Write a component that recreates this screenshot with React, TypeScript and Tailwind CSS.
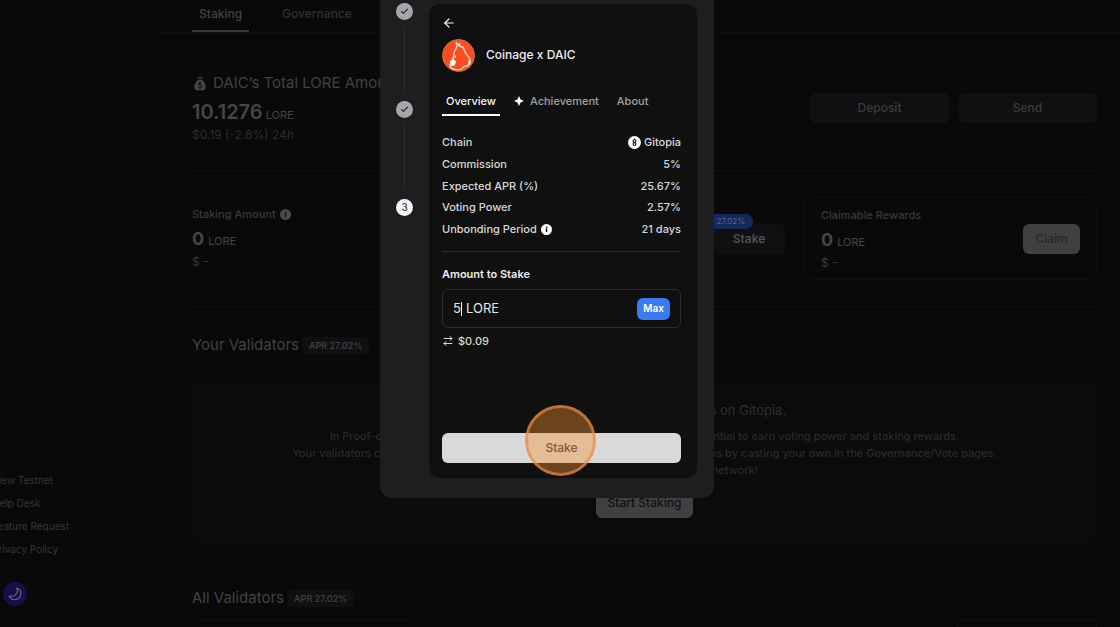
import { useState } from "react";
import { ArrowLeft, ArrowRightLeft, Check } from "lucide-react";

const footerLinks = ["View Testnet", "Help Desk", "Feature Request", "Privacy Policy"];

function InfoIcon({ className }: { className?: string }) {
  return (
    <svg viewBox="0 0 12 12" className={className} aria-hidden="true">
      <circle cx="6" cy="6" r="6" fill="currentColor" />
      <path d="M6.100 2.600v1.500M5.200 5.400h.9v3.400" stroke="#101011" strokeWidth="1.500" fill="none" />
    </svg>
  );
}

function MoneyBag() {
  return (
    <svg viewBox="0 0 14 17" className="mr-px size-4" aria-hidden="true">
      <path d="M3.6 1.2 5.4 2 7 1l1.8 1 1.8-.8-1.4 3.3H4.9z" fill="#303032" />
      <path d="M4.8 5.4h4.6c2 1.6 3.6 4.6 3.6 7 0 2.6-1.4 3.8-3 3.8H4c-1.6 0-3-1.2-3-3.8 0-2.4 1.8-5.4 3.8-7z" fill="#454547" />
      <path d="M9.2 8.8C8.600 8 5 7.600 5 9.400s4.200 1 4.200 2.800S5.600 14.200 4.800 13M7 7v8" stroke="#111" strokeWidth="1" fill="none" />
    </svg>
  );
}

function MoonIcon() {
  return (
    <svg viewBox="0 0 14 14" className="size-[14px]" aria-hidden="true">
      <path
        d="M8.600 1.200c3 .8 4.600 3.200 4.200 6-.4 3.200-3 5.400-6.200 5.400C4 12.600 2 11.200 1.200 9c2.400.8 4.800.4 6.400-1.200 1.800-1.700 2.100-4.300 1-6.600z"
        fill="none"
        stroke="#5c6668"
        strokeWidth="1.200"
        strokeLinejoin="round"
      />
    </svg>
  );
}

function CoinageLogo() {
  return (
    <svg viewBox="0 0 33 33" className="size-[33px]" aria-hidden="true">
      <circle cx="16.500" cy="16.500" r="16" fill="#fb4c22" stroke="#c07a3c" />
      <path
        d="M14.200 3.500l2 2.600 1.600-1.400-.4 2.600 3.400.8 1.400 3 2.400 4.200 3.200 4.200.6 4-2.600 3.200-3.800.8-2.200 2.400-3.400 1-4.600-.8-3-1.200-.8-3.400 2.400-4 1-3 .8-5.400 2.200-4.200.6-2.600z"
        fill="none"
        stroke="#f1dcc2"
        strokeWidth="1.400"
        strokeLinejoin="round"
      />
      <path d="M8 22l3.500-2 2.500 2.500-1.500 4L9 27zM12.500 16l1.500 1-1 3z" fill="#fff" />
      <path d="M20 7.500l3 1.500-2 1.200zM27 20l2 3-3.500 3z" fill="#f1dcc2" />
    </svg>
  );
}

function GitopiaIcon() {
  return (
    <svg viewBox="0 0 13 13" className="size-[13px]" aria-hidden="true">
      <circle cx="6.500" cy="6.500" r="6.500" fill="#fff" />
      <circle cx="6.500" cy="4.900" r="1.400" fill="none" stroke="#222" strokeWidth="1.200" />
      <circle cx="6.500" cy="8.100" r="1.400" fill="none" stroke="#222" strokeWidth="1.200" />
      <path d="M6.500 2.600v1.400M5.500 6.500h2" stroke="#222" />
    </svg>
  );
}

function AprBadge() {
  return (
    <span className="rounded-sm bg-[#101012] px-[7px] text-[9px] leading-[17px] font-semibold text-[#3d3d40]">
      APR 27.02%
    </span>
  );
}

function Balance({ label, info }: { label: string; info?: boolean }) {
  return (
    <div className="text-[11px] font-medium text-[#39393b]">
      <p className="flex items-center gap-1 leading-4">
        {label}
        {info && <InfoIcon className="size-[11px] text-[#4a4a4c]" />}
      </p>
      <p className="mt-1 flex items-baseline gap-1 leading-[26px] font-normal text-[#454547]">
        <span className="text-lg leading-[26px] font-bold">0</span> LORE
      </p>
      <p className="text-xs leading-4 font-normal">$ -</p>
    </div>
  );
}

function Sidebar() {
  return (
    <aside className="flex w-[156px] shrink-0 flex-col border-r border-[#0d0d0e] pt-[471px]">
      <nav className="-ml-2 flex flex-col gap-[5px] text-[10px] leading-[18px] text-[#353537]">
        {footerLinks.map((link) => (
          <a key={link} href="#" className="whitespace-nowrap">
            {link}
          </a>
        ))}
      </nav>
      <button
        aria-label="Toggle theme"
        className="mt-6 ml-[3px] flex size-6 items-center justify-center rounded-full bg-[#170f4c]"
      >
        <MoonIcon />
      </button>
    </aside>
  );
}

function Dashboard() {
  return (
    <main className="min-w-0 flex-1">
      <nav className="flex h-[33px] gap-[26px] border-b border-[#101011] pl-9 text-xs font-medium">
        <a href="#" className="border-b-2 border-[#3a3a3c] px-[7px] pt-1 leading-5 text-[#414143]">
          Staking
        </a>
        <a href="#" className="px-[7px] pt-1 leading-5 text-[#303032]">
          Governance
        </a>
      </nav>

      <div className="pr-[23px] pl-9">
        <section className="flex h-[138px] items-start justify-between border-b border-[#121213] pt-10">
          <div className="text-[#414143]">
            <h1 className="flex items-center gap-1 text-[15px] leading-5">
              <MoneyBag /> DAIC’s Total LORE Amount
            </h1>
            <p className="mt-1 flex items-baseline gap-[3px] text-[11px] leading-[30px] text-[#454547]">
              <span className="text-xl leading-[30px] font-semibold">10.1276</span> LORE
            </p>
            <p className="text-xs leading-[10px] text-[#2c2c2e]">$0.19 (-2.6%) 24h</p>
          </div>
          <div className="mt-5 flex gap-[9px] text-xs font-medium text-[#3b3b3d]">
            <button className="h-[30px] w-[139px] rounded-md bg-[#101012]">Deposit</button>
            <button className="h-[30px] w-[139px] rounded-md bg-[#101012]">Send</button>
          </div>
        </section>

        <section className="flex h-[136px] items-start gap-[19px] border-b border-[#121213] pt-[26px]">
          <div className="flex flex-1 items-start justify-between pt-[9px]">
            <Balance label="Staking Amount" info />
            <div className="relative mt-[18px]">
              <button className="h-[30px] w-[72px] rounded-md bg-[#101012] text-xs font-semibold text-[#505052]">
                Stake
              </button>
              <span className="absolute -top-[10px] right-8 rounded-full bg-[#142a5c] px-2 text-[8px] leading-[15px] whitespace-nowrap text-[#52648c]">
                APR 27.02%
              </span>
            </div>
          </div>
          <div className="flex h-[83px] w-[293px] items-center justify-between rounded-lg border border-[#101011] px-4">
            <Balance label="Claimable Rewards" />
            <button className="h-[30px] w-[57px] rounded-md bg-[#404042] text-xs font-medium text-[#282829]">
              Claim
            </button>
          </div>
        </section>

        <h2 className="mt-[26px] flex items-center gap-[3px] text-[15px] leading-6 text-[#414143]">
          Your Validators <AprBadge />
        </h2>
        <section className="mt-[22px] flex h-[164px] flex-col items-center rounded-md bg-[#0b0b0b] pt-[21px] text-center">
          <h3 className="text-[13px] leading-5 text-[#2e2e30]">You have not picked any validators on Gitopia.</h3>
          <p className="mt-2 text-[11px] leading-[17px] font-medium whitespace-nowrap text-[#29292b]">
            In Proof-of-Stake networks, picking trusted validators to delegate is essential to earn voting power and staking rewards.
            <br />
            Your validators cast votes for you on proposals, and you can override all the votes by casting your own in the Governance/Vote pages.
            <br />
            Start today and help to secure the network!
          </p>
          <button className="mt-[9px] h-[30px] w-[97px] shrink-0 rounded-md bg-[#404042] text-xs font-medium text-[#111]">
            Start Staking
          </button>
        </section>

        <h2 className="mt-[43px] flex items-center gap-[3px] text-[15px] leading-6 text-[#414143]">
          All Validators <AprBadge />
        </h2>
        <div className="mt-[9px] flex h-8 justify-between">
          <div className="w-[224px] rounded-t-md border-t border-[#131314]" />
          <div className="w-[140px] rounded-md border border-[#131314]" />
        </div>
      </div>
    </main>
  );
}

function Stepper() {
  return (
    <ol className="flex w-[49px] flex-col items-center pt-[3px]">
      {[1, 2].map((step) => (
        <li key={step} className="flex h-[98px] flex-col items-center">
          <span className="flex size-[17px] items-center justify-center rounded-full bg-[#a6a6aa] text-[#29292b]">
            <Check className="size-[9px]" strokeWidth={3} />
          </span>
          <span className="mt-[7px] mb-[10px] w-px flex-1 bg-[#2d2d30]" />
        </li>
      ))}
      <li className="flex size-[17px] items-center justify-center rounded-full bg-[#f5f5f8] text-[10px] text-[#222]">3</li>
    </ol>
  );
}

function StakeDialog() {
  const [amount, setAmount] = useState("5");

  return (
    <div className="absolute inset-0 flex items-start justify-center pr-[26px]">
      <div role="dialog" aria-label="Stake" className="flex w-[334px] rounded-b-xl bg-[#1e1e20] pr-[17px] pb-5">
        <Stepper />
        <div className="mt-1 flex h-[474px] flex-1 flex-col rounded-[10px] bg-[#101011] pr-4 pb-[15px] pl-[13px] text-[#d8d8da]">
          <button aria-label="Back" className="mt-3 self-start text-white">
            <ArrowLeft className="size-[14px]" strokeWidth={2} />
          </button>
          <div className="mt-[9px] flex items-start gap-[11px]">
            <CoinageLogo />
            <h2 className="text-xs leading-8 font-medium text-[#ececee]">Coinage x DAIC</h2>
          </div>

          <div className="mt-[19px] flex gap-[14px] text-[11px] leading-5 font-medium text-[#a0a0a3]">
            <button className="h-[25px] border-b-2 border-white px-1 pb-[3px] leading-5 text-[#f5f5f7]">Overview</button>
            <button className="flex h-5 items-center gap-[6px]">
              <svg viewBox="0 0 10 10" className="size-[10px] text-white" aria-hidden="true">
                <path d="M5 0 6.600 3.400 10 5 6.600 6.600 5 10 3.400 6.600 0 5 3.400 3.400z" fill="currentColor" />
              </svg>
              Achievement
            </button>
            <button className="h-5 px-1">About</button>
          </div>

          <dl className="mt-4 flex h-[120px] flex-col justify-between border-b border-[#2d2d30] pb-3 text-[11px] leading-5 font-medium">
            <div className="flex justify-between">
              <dt>Chain</dt>
              <dd className="flex items-center gap-[3px]">
                <GitopiaIcon /> Gitopia
              </dd>
            </div>
            <div className="flex justify-between">
              <dt>Commission</dt>
              <dd>5%</dd>
            </div>
            <div className="flex justify-between">
              <dt>Expected APR (%)</dt>
              <dd>25.67%</dd>
            </div>
            <div className="flex justify-between">
              <dt>Voting Power</dt>
              <dd>2.57%</dd>
            </div>
            <div className="flex justify-between">
              <dt className="flex items-center gap-1">
                Unbonding Period <InfoIcon className="size-[11px] text-white" />
              </dt>
              <dd>21 days</dd>
            </div>
          </dl>

          <label htmlFor="amount" className="mt-3 text-[11px] leading-5 font-semibold text-[#ececee]">
            Amount to Stake
          </label>
          <div className="mt-[5px] flex h-[39px] shrink-0 items-center rounded-md border border-[#2d2d30] px-[10px] text-[13px] text-[#e4e4e6]">
            <input
              id="amount"
              value={amount}
              onChange={(e) => setAmount(e.target.value)}
              className="w-2 bg-transparent outline-none"
            />
            <span className="h-[14px] w-px bg-white" />
            <span className="ml-1">LORE</span>
            <button className="ml-auto h-[22px] w-[33px] rounded-md bg-[#3b7bf0] text-[10px] font-semibold text-white">
              Max
            </button>
          </div>
          <p className="mt-[3px] flex items-center gap-1 text-[11px] leading-5 font-medium">
            <ArrowRightLeft className="size-3" strokeWidth={2} /> $0.09
          </p>
          <button className="relative mt-auto h-[30px] rounded-md bg-[#d9d9d9] text-xs font-medium text-[#333]">
            Stake
            {/* click highlight */}
            <span className="absolute top-1/2 left-1/2 -mt-[43px] -ml-[37px] size-[71px] rounded-full border-[3px] border-[#ee8a46]/66 bg-[#f6922f]/40" />
          </button>
        </div>
      </div>
    </div>
  );
}

export default function App() {
  return (
    <div className="relative flex h-screen overflow-hidden bg-[#090909] font-[Inter,sans-serif]">
      <Sidebar />
      <Dashboard />
      <StakeDialog />
    </div>
  );
}
